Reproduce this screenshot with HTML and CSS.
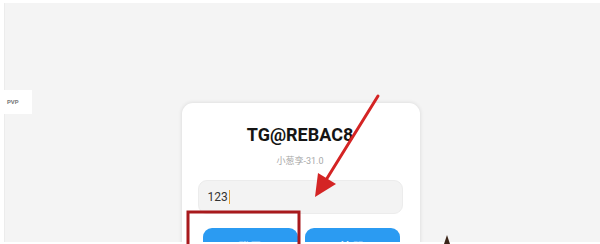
FILE: index.html
```html
<!DOCTYPE html>
<html lang="zh">
<head>
<meta charset="utf-8">
<link rel="stylesheet" href="styles.css">
</head>
<body>
<div class="frame">
  <div class="badge">PVP</div>
  <main class="stage">
    <section class="card">
      <h1 class="title">TG@REBAC8</h1>
      <p class="subtitle">小葱孪-31.0</p>
      <div class="field"><span class="value">123</span><span class="caret"></span></div>
      <div class="actions">
        <button class="btn">登录</button>
        <button class="btn">注册</button>
      </div>
    </section>
  </main>
  <svg class="annot" width="600" height="244" viewBox="0 0 600 244">
    <line x1="378" y1="96" x2="326" y2="180" stroke="#d42424" stroke-width="3" stroke-linecap="round"/>
    <polygon points="315,197 318,173 336,184" fill="#d42424"/>
    <rect x="188" y="212" width="111" height="40" fill="none" stroke="#a8191c" stroke-width="3"/>
    <polygon points="447,235 444,244 450,244" fill="#3a2418"/>
  </svg>
</div>
</body>
</html>
```
FILE: styles.css
```css
html, body {
  margin: 0;
  padding: 0;
}
body {
  width: 600px;
  height: 244px;
  overflow: hidden;
  background: #ffffff;
  font-family: Roboto, "Liberation Sans", "Noto Sans CJK SC", sans-serif;
}
.frame {
  position: relative;
  width: 600px;
  height: 244px;
  box-sizing: border-box;
  padding: 3px 0 2px 4px;
}
.stage {
  height: 100%;
  background: #f4f4f4;
  display: flex;
  justify-content: center;
  align-items: flex-start;
  padding-top: 100px;
  box-sizing: border-box;
  border-left: 1px solid #ececec;
  overflow: hidden;
}
.badge {
  position: absolute;
  left: 0;
  top: 90px;
  width: 32px;
  height: 24px;
  background: #ffffff;
  font-size: 6px;
  font-weight: bold;
  color: #777;
  line-height: 24px;
  padding-left: 7px;
  box-sizing: border-box;
}
.card {
  flex-shrink: 0;
  width: 238px;
  margin-left: -4px;
  background: #ffffff;
  border-radius: 11px;
  box-shadow: 0 0 4px rgba(0,0,0,0.12);
  padding: 0 17px 20px 16px;
  box-sizing: border-box;
  display: flex;
  flex-direction: column;
}
.card > * {
  flex-shrink: 0;
}
.title {
  margin: 20px 0 0;
  text-align: center;
  font-size: 18px;
  font-weight: bold;
  color: #151515;
  line-height: 24px;
}
.subtitle {
  margin: 8px 0 0;
  text-align: center;
  font-size: 9px;
  color: #a8a8a8;
  line-height: 12px;
}
.field {
  margin-top: 13px;
  height: 34px;
  background: #f3f3f3;
  border: 1px solid #ececec;
  border-radius: 9px;
  box-sizing: border-box;
  display: flex;
  align-items: center;
  padding-left: 9px;
}
.value {
  font-size: 12px;
  color: #333;
}
.caret {
  width: 1px;
  height: 14px;
  background: #e8a030;
  margin-left: 1px;
}
.actions {
  margin-top: 14px;
  padding: 0 3px 0 5px;
  display: flex;
  gap: 7px;
}
.btn {
  flex: 1;
  height: 36px;
  border: none;
  border-radius: 9px;
  background: #2b9bf2;
  color: #ffffff;
  font-family: "Noto Sans CJK SC", sans-serif;
  font-size: 12px;
  font-weight: bold;
  padding: 0;
}
.annot {
  position: absolute;
  left: 0;
  top: 0;
}
```
